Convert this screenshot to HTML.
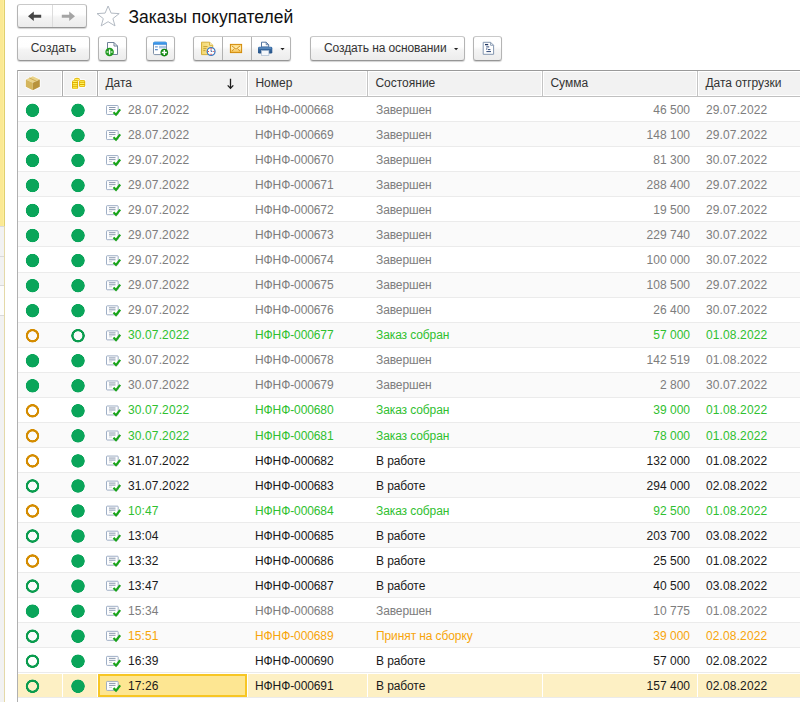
<!DOCTYPE html>
<html><head><meta charset="utf-8"><title>Заказы покупателей</title>
<style>
*{box-sizing:border-box;margin:0;padding:0}
html,body{width:800px;height:702px;overflow:hidden;background:#fff}
body{position:relative;font-family:"Liberation Sans",sans-serif;font-size:12px;color:#333}
.abs{position:absolute}
/* left strip */
#ls1{position:absolute;left:0;top:0;width:5px;height:226px;background:linear-gradient(90deg,#fbe994 0,#fbe994 3px,#fdef9f 3px,#fdef9f 4px,#e0cf6e 4px)}
#ls2{position:absolute;left:0;top:226px;width:5px;height:476px;background:#f2f2f2}
#lsl{position:absolute;left:4px;top:226px;width:1px;height:476px;background:#e4d9a8}
.lsh{position:absolute;left:0;width:4px;height:1px;background:#d9d9d9}
/* buttons */
.btn{position:absolute;height:25px;border:1px solid #b4b4b4;border-top-color:#c9c9c9;border-bottom-color:#969696;border-radius:3px;
 background:linear-gradient(#ffffff 0%,#fefefe 42%,#f4f4f4 56%,#ececec 100%);box-shadow:0 1px 1px rgba(0,0,0,.18);
 font-size:12px;color:#333;line-height:23px;white-space:nowrap}
.btn .dv{position:absolute;top:0;width:1px;height:23px;background:#cfcfcf}
.dd{position:absolute;width:0;height:0;border-left:3px solid transparent;border-right:3px solid transparent;border-top:3px solid #333}
#title{position:absolute;left:128.5px;top:7px;font-size:17.5px;line-height:20px;color:#111;white-space:nowrap}
/* table header */
#tb{position:absolute;left:17px;top:70px;width:783px;height:1px;background:#9a9a9a}
#tl{position:absolute;left:17px;top:70px;width:1px;height:632px;background:#b0b0b0}
#hb{position:absolute;left:18px;top:96px;width:782px;height:1px;background:#c0c0c0}
.hc{position:absolute;top:72px;height:23px;background:#f2f2f2;font-size:12px;line-height:23px;color:#333;white-space:nowrap}
.hs{position:absolute;top:71px;width:1px;height:25px;background:#c4c4c4}
/* rows */
.r{position:absolute;left:18px;width:782px;white-space:nowrap;font-size:12px}
.r.alt{background:#fafafa}
.sep{position:absolute;left:18px;width:782px;height:1px;background:#ebebeb}
.t{position:absolute;top:1px}
.t.d{left:110px}
.t.n{left:237px}
.t.s{left:358px}
.t.m{right:110px}
.t.g{left:688px}
.gray{color:#7d7d7d}
.green{color:#2fc02f}
.black{color:#1a1a1a}
.orange{color:#f7a50a}
.c{position:absolute;top:6px;width:14px;height:14px;border-radius:50%;margin-left:-18px}
.cf{background:radial-gradient(circle at 50% 50%,#0aa55a 6.4px,rgba(10,165,90,0) 7.1px)}
.cr{background:radial-gradient(circle at 50% 50%,rgba(10,156,78,0) 4.1px,#0a9c4e 4.7px,#0a9c4e 6.5px,rgba(10,156,78,0) 7.1px)}
.co{background:radial-gradient(circle at 50% 50%,rgba(212,140,0,0) 4.1px,#d48c00 4.7px,#d48c00 6.5px,rgba(212,140,0,0) 7.1px)}
.doc{position:absolute;left:88px;top:6.6px}
.r.sel{background:#fff}
.sb{position:absolute;top:1px;bottom:0;background:#fdf0c4}
.sf{position:absolute;left:80px;width:149px;top:1px;bottom:0;background:#fde692;border:2px solid #f7c624}
.in{position:absolute;left:0;width:782px;height:25px;line-height:25px}
#bigbtn{letter-spacing:-0.1px}
.c{transform:translateY(.35px)}
.c1{transform:translate(.5px,.35px)}
.t.n,.t.s{letter-spacing:-0.1px}
.t.d,.t.g{letter-spacing:.12px}

</style></head><body>
<svg width="0" height="0" style="position:absolute">
 <defs>
  <g id="docico">
   <rect x="0.5" y="1.5" width="11.7" height="9" rx="0.8" fill="#fdfdfe" stroke="#94a6c0" stroke-width=".9"/>
   <path d="M3 3.5H9.5 M3 5.5H9.5" stroke="#76879f" stroke-width=".85" fill="none"/>
   <path d="M3 7.5H6" stroke="#c9cfd8" stroke-width="1" fill="none"/>
   <path d="M7.5 8.2 L10 10.7 L14.2 5.4" stroke="#18a418" stroke-width="2.15" fill="none" stroke-linejoin="miter"/>
  </g>
 </defs>
</svg>
<div id="ls1"></div><div id="ls2"></div><div id="lsl"></div>
<div class="abs" style="left:0;top:286px;width:4px;height:29px;background:#fcfcfc"></div><div class="lsh" style="top:226px"></div><div class="lsh" style="top:256px"></div><div class="lsh" style="top:285px"></div><div class="lsh" style="top:315px"></div>

<!-- nav -->
<div class="btn" style="left:17px;top:4px;width:70px;height:24px">
 <div class="dv" style="left:34px;height:22px;background:#dcdcdc"></div>
</div>
<svg class="abs" style="left:0;top:0;z-index:4" width="130" height="32" viewBox="0 0 130 32">
 <path d="M28 16.2L33.8 11.4V14.8H41.2V17.7H33.8V21Z" fill="#454545"/>
 <path d="M75 16.2L69.2 11.4V14.8H61.8V17.7H69.2V21Z" fill="#a4a4a4"/>
 <path d="M108.1 6 L111.1 13.1 L119.2 13.6 L112.9 18.6 L115 25.9 L108.1 21.7 L101.2 25.9 L103.3 18.6 L97 13.6 L105.1 13.1 Z" fill="#fff" stroke="#b3bac3" stroke-width="1"/>
</svg>
<div id="title">Заказы покупателей</div>

<!-- toolbar -->
<div class="btn" style="left:17px;top:36px;width:73px;text-align:center">Создать</div>
<div class="btn" style="left:98px;top:36px;width:29px"></div>
<div class="btn" style="left:146px;top:36px;width:29px"></div>
<div class="btn" style="left:193px;top:36px;width:98px">
 <div class="dv" style="left:28px;background:#b2b2b2"></div><div class="dv" style="left:57px;background:#b2b2b2"></div>
 
</div>
<div class="btn" id="bigbtn" style="left:310px;top:36px;width:155px;padding-left:13px">Создать на основании</div>
<div class="btn" style="left:473px;top:36px;width:29px"></div>

<!-- table header -->
<div id="tb"></div><div id="tl"></div><div id="hb"></div>
<div class="hc" style="left:19px;width:42px"></div>
<div class="hc" style="left:64px;width:32px"></div>
<div class="hc" style="left:99px;width:147px;padding-left:6.4px">Дата</div>
<div class="hc" style="left:249px;width:117px;padding-left:6.4px">Номер</div>
<div class="hc" style="left:369px;width:172px;padding-left:6.4px">Состояние</div>
<div class="hc" style="left:544px;width:152px;padding-left:6.4px">Сумма</div>
<div class="hc" style="left:699px;width:101px;padding-left:6.4px">Дата отгрузки</div>
<div class="hs" style="left:62px;background:#adadad"></div><div class="hs" style="left:97px;background:#adadad"></div><div class="hs" style="left:247px"></div><div class="hs" style="left:367px"></div><div class="hs" style="left:542px"></div><div class="hs" style="left:697px"></div>

<svg class="abs" style="left:0;top:0;z-index:5" width="800" height="97" viewBox="0 0 800 97">
 <defs>
  <linearGradient id="gEnv" x1="0" y1="0" x2="0" y2="1"><stop offset="0" stop-color="#fbd676"/><stop offset=".45" stop-color="#ffeeb4"/><stop offset="1" stop-color="#f3b73c"/></linearGradient>
  <linearGradient id="gBlue" x1="0" y1="0" x2="0" y2="1"><stop offset="0" stop-color="#4ea6f2"/><stop offset="1" stop-color="#2f86db"/></linearGradient>
  <linearGradient id="gPr" x1="0" y1="0" x2="0" y2="1"><stop offset="0" stop-color="#3f74ad"/><stop offset="1" stop-color="#234f84"/></linearGradient>
  <linearGradient id="gDocY" x1="0" y1="0" x2="1" y2="0"><stop offset="0" stop-color="#f3d76e"/><stop offset="1" stop-color="#fae9a0"/></linearGradient>
 </defs>
 <!-- new doc (copy) icon -->
 <path d="M107.5 42.5H114L117.5 46V54.5H107.5Z" fill="#fff" stroke="#6f8198" stroke-width="1"/>
 <path d="M114 42.5V46H117.5" fill="none" stroke="#6f8198" stroke-width="1"/>
 <circle cx="109.6" cy="52" r="4.3" fill="#1f9a1f"/>
 <path d="M109.6 49.5V54.5" stroke="#fff" stroke-width="1.4"/>
 <path d="M106.6 52H108.4M110.8 52H112.6" stroke="#bfe8bf" stroke-width="1.6"/>
 <!-- window plus icon -->
 <rect x="153.5" y="42.2" width="13" height="12.4" rx="1.2" fill="#fff" stroke="#7d90a8" stroke-width="1"/>
 <path d="M153 44.8V43.4Q153 41.7 154.7 41.7H165.3Q167 41.7 167 43.4V44.8Z" fill="url(#gBlue)"/>
 <rect x="155" y="46.2" width="2.8" height="1.3" fill="#7fa6d6"/>
 <rect x="159" y="45.8" width="7" height="2.6" fill="#a9c4e4"/>
 <rect x="155" y="49" width="2.8" height="1.3" fill="#5d8fce"/>
 <circle cx="164.3" cy="52.6" r="3.8" fill="#0f860f"/>
 <path d="M164.3 50.1V55.1M161.8 52.6H166.8" stroke="#fff" stroke-width="1.5"/>
 <!-- doc with clock -->
 <path d="M201.5 42.2H209.6L212.7 45.3V54.6H201.5Z" fill="url(#gDocY)" stroke="#d6b03c" stroke-width="1"/>
 <path d="M209.6 42.2V45.3H212.7" fill="#fff6cf" stroke="#d6b03c" stroke-width="1"/>
 <path d="M203.3 46.6H207.5M203.3 48.6H206.5M203.3 50.6H205.5" stroke="#c9a233" stroke-width="1"/>
 <circle cx="211.1" cy="51.5" r="3.9" fill="#fff" stroke="#3b78bf" stroke-width="1.3"/>
 <path d="M211.1 48.3V49.3M211.1 53.7V54.7M207.9 51.5H208.9M213.3 51.5H214.3" stroke="#e33" stroke-width="1.2"/>
 <path d="M211.1 51.5V49.6M211.1 51.5H212.4" stroke="#3b5f9a" stroke-width=".9"/>
 <!-- envelope -->
 <rect x="230.4" y="44.4" width="11.2" height="8.2" fill="url(#gEnv)" stroke="#d28a08" stroke-width="1"/>
 <path d="M231.8 45.8L236 49.2L240.2 45.8M231.8 51.3L234.6 48.6M240.2 51.3L237.4 48.6" fill="none" stroke="#cf8a14" stroke-width=".9"/>
 <!-- printer -->
 <path d="M261.5 47V42.2H266.2L268.7 44.7V47Z" fill="#fff" stroke="#5676a0" stroke-width="1"/>
 <path d="M266.2 42.2V44.7H268.7" fill="none" stroke="#5676a0" stroke-width=".9"/>
 <rect x="258" y="46.8" width="14.3" height="6.8" rx="1.4" fill="url(#gPr)"/>
 <rect x="259.2" y="47.6" width="11.9" height="1" fill="#6a97c8"/>
 <rect x="261.3" y="50.5" width="7.6" height="4.8" fill="#f4f7fb" stroke="#9fb2cb" stroke-width=".6"/>
 <path d="M280.4 48H284.6L282.5 50.3Z" fill="#222"/>
 <!-- create-based-on arrow -->
 <path d="M454 48H458.2L456.1 50.3Z" fill="#222"/>
 <!-- structure doc icon -->
 <path d="M483.2 42.3H490.6L493.6 45.3V54.3H483.2Z" fill="#fff" stroke="#8497b0" stroke-width="1"/>
 <path d="M490.6 42.3V45.3H493.6" fill="none" stroke="#8497b0" stroke-width=".9"/>
 <path d="M485 44.6H488.2" stroke="#1f3560" stroke-width="1.3"/>
 <path d="M486.2 46.9H489.2M486 49H487.4M488 49.6H490.4M486.4 51.6H491" stroke="#2c4676" stroke-width="1"/>
 <!-- sort arrow -->
 <path d="M230.5 78.8V88 M227.7 85.4L230.5 88.4L233.3 85.4" fill="none" stroke="#1e1e1e" stroke-width="1.3"/>
 <!-- box icon -->
 <path d="M32.8 75.6L40.6 79.2V87.2L32.8 91L25 87.2V79.2Z" fill="#fff" opacity=".85"/>
 <path d="M32.8 76.3L39.8 79.5L32.8 82.8L25.8 79.5Z" fill="#ead38a"/>
 <path d="M25.8 79.5L32.8 82.8V90.2L25.8 86.8Z" fill="#d4b55c"/>
 <path d="M39.8 79.5L32.8 82.8V90.2L39.8 86.8Z" fill="#b8933c"/>
 <path d="M29.3 77.9L36.3 81.2" stroke="#cfae55" stroke-width="1"/>
 <!-- coins -->
 <g fill="#fff" stroke="#fff" stroke-width="1.8" opacity=".75">
  <rect x="72" y="80.3" width="6.1" height="8.7" rx="1.6"/>
  <ellipse cx="77" cy="79.3" rx="2.9" ry="1.5"/>
  <rect x="79.1" y="79.9" width="6.1" height="7.2" rx="1.6"/>
 </g>
 <rect x="72" y="80.3" width="6.1" height="8.7" rx="1.6" fill="#dfae00"/>
 <rect x="79.1" y="79.9" width="6.1" height="7.2" rx="1.6" fill="#dfae00"/>
 <ellipse cx="77" cy="79.3" rx="2.9" ry="1.5" fill="#dfae00"/>
 <g stroke="#fff25e" stroke-width="1.15" stroke-linecap="round">
  <path d="M73.3 81.5H76.8M73.3 83.6H76.8M73.3 85.7H76.8M73.3 87.8H76.8"/>
  <path d="M75.4 79.3H78.6"/>
  <path d="M80.4 81.2H83.9M80.4 83.4H83.9M80.4 85.6H83.9"/>
 </g>
</svg>


<div id="rows">
<div class="r gray" style="top:97px;height:24px"><div class="in" style="transform:translateY(0.0px)"><i class="c c1 cf" style="left:25px"></i><i class="c cf" style="left:71px"></i><svg class="doc" viewBox="0 0 16 13" width="16" height="13"><use href="#docico"/></svg><span class="t d">28.07.2022</span><span class="t n">НФНФ-000668</span><span class="t s">Завершен</span><span class="t m">46 500</span><span class="t g">29.07.2022</span></div></div>
<div class="sep" style="top:121px"></div>
<div class="r alt gray" style="top:122px;height:24px"><div class="in" style="transform:translateY(0.04px)"><i class="c c1 cf" style="left:25px"></i><i class="c cf" style="left:71px"></i><svg class="doc" viewBox="0 0 16 13" width="16" height="13"><use href="#docico"/></svg><span class="t d">28.07.2022</span><span class="t n">НФНФ-000669</span><span class="t s">Завершен</span><span class="t m">148 100</span><span class="t g">29.07.2022</span></div></div>
<div class="sep" style="top:146px"></div>
<div class="r gray" style="top:147px;height:24px"><div class="in" style="transform:translateY(0.08px)"><i class="c c1 cf" style="left:25px"></i><i class="c cf" style="left:71px"></i><svg class="doc" viewBox="0 0 16 13" width="16" height="13"><use href="#docico"/></svg><span class="t d">29.07.2022</span><span class="t n">НФНФ-000670</span><span class="t s">Завершен</span><span class="t m">81 300</span><span class="t g">30.07.2022</span></div></div>
<div class="sep" style="top:171px"></div>
<div class="r alt gray" style="top:172px;height:24px"><div class="in" style="transform:translateY(0.12px)"><i class="c c1 cf" style="left:25px"></i><i class="c cf" style="left:71px"></i><svg class="doc" viewBox="0 0 16 13" width="16" height="13"><use href="#docico"/></svg><span class="t d">29.07.2022</span><span class="t n">НФНФ-000671</span><span class="t s">Завершен</span><span class="t m">288 400</span><span class="t g">29.07.2022</span></div></div>
<div class="sep" style="top:196px"></div>
<div class="r gray" style="top:197px;height:24px"><div class="in" style="transform:translateY(0.16px)"><i class="c c1 cf" style="left:25px"></i><i class="c cf" style="left:71px"></i><svg class="doc" viewBox="0 0 16 13" width="16" height="13"><use href="#docico"/></svg><span class="t d">29.07.2022</span><span class="t n">НФНФ-000672</span><span class="t s">Завершен</span><span class="t m">19 500</span><span class="t g">29.07.2022</span></div></div>
<div class="sep" style="top:221px"></div>
<div class="r alt gray" style="top:222px;height:24px"><div class="in" style="transform:translateY(0.2px)"><i class="c c1 cf" style="left:25px"></i><i class="c cf" style="left:71px"></i><svg class="doc" viewBox="0 0 16 13" width="16" height="13"><use href="#docico"/></svg><span class="t d">29.07.2022</span><span class="t n">НФНФ-000673</span><span class="t s">Завершен</span><span class="t m">229 740</span><span class="t g">30.07.2022</span></div></div>
<div class="sep" style="top:246px"></div>
<div class="r gray" style="top:247px;height:25px"><div class="in" style="transform:translateY(0.24px)"><i class="c c1 cf" style="left:25px"></i><i class="c cf" style="left:71px"></i><svg class="doc" viewBox="0 0 16 13" width="16" height="13"><use href="#docico"/></svg><span class="t d">29.07.2022</span><span class="t n">НФНФ-000674</span><span class="t s">Завершен</span><span class="t m">100 000</span><span class="t g">30.07.2022</span></div></div>
<div class="sep" style="top:272px"></div>
<div class="r alt gray" style="top:273px;height:24px"><div class="in" style="transform:translateY(-0.72px)"><i class="c c1 cf" style="left:25px"></i><i class="c cf" style="left:71px"></i><svg class="doc" viewBox="0 0 16 13" width="16" height="13"><use href="#docico"/></svg><span class="t d">29.07.2022</span><span class="t n">НФНФ-000675</span><span class="t s">Завершен</span><span class="t m">108 500</span><span class="t g">29.07.2022</span></div></div>
<div class="sep" style="top:297px"></div>
<div class="r gray" style="top:298px;height:24px"><div class="in" style="transform:translateY(-0.68px)"><i class="c c1 cf" style="left:25px"></i><i class="c cf" style="left:71px"></i><svg class="doc" viewBox="0 0 16 13" width="16" height="13"><use href="#docico"/></svg><span class="t d">29.07.2022</span><span class="t n">НФНФ-000676</span><span class="t s">Завершен</span><span class="t m">26 400</span><span class="t g">30.07.2022</span></div></div>
<div class="sep" style="top:322px"></div>
<div class="r alt green" style="top:323px;height:24px"><div class="in" style="transform:translateY(-0.64px)"><i class="c c1 co" style="left:25px"></i><i class="c cr" style="left:71px"></i><svg class="doc" viewBox="0 0 16 13" width="16" height="13"><use href="#docico"/></svg><span class="t d">30.07.2022</span><span class="t n">НФНФ-000677</span><span class="t s">Заказ собран</span><span class="t m">57 000</span><span class="t g">01.08.2022</span></div></div>
<div class="sep" style="top:347px"></div>
<div class="r gray" style="top:348px;height:24px"><div class="in" style="transform:translateY(-0.6px)"><i class="c c1 cf" style="left:25px"></i><i class="c cf" style="left:71px"></i><svg class="doc" viewBox="0 0 16 13" width="16" height="13"><use href="#docico"/></svg><span class="t d">30.07.2022</span><span class="t n">НФНФ-000678</span><span class="t s">Завершен</span><span class="t m">142 519</span><span class="t g">01.08.2022</span></div></div>
<div class="sep" style="top:372px"></div>
<div class="r alt gray" style="top:373px;height:24px"><div class="in" style="transform:translateY(-0.56px)"><i class="c c1 cf" style="left:25px"></i><i class="c cf" style="left:71px"></i><svg class="doc" viewBox="0 0 16 13" width="16" height="13"><use href="#docico"/></svg><span class="t d">30.07.2022</span><span class="t n">НФНФ-000679</span><span class="t s">Завершен</span><span class="t m">2 800</span><span class="t g">30.07.2022</span></div></div>
<div class="sep" style="top:397px"></div>
<div class="r green" style="top:398px;height:24px"><div class="in" style="transform:translateY(-0.52px)"><i class="c c1 co" style="left:25px"></i><i class="c cf" style="left:71px"></i><svg class="doc" viewBox="0 0 16 13" width="16" height="13"><use href="#docico"/></svg><span class="t d">30.07.2022</span><span class="t n">НФНФ-000680</span><span class="t s">Заказ собран</span><span class="t m">39 000</span><span class="t g">01.08.2022</span></div></div>
<div class="sep" style="top:422px"></div>
<div class="r alt green" style="top:423px;height:24px"><div class="in" style="transform:translateY(-0.48px)"><i class="c c1 co" style="left:25px"></i><i class="c cf" style="left:71px"></i><svg class="doc" viewBox="0 0 16 13" width="16" height="13"><use href="#docico"/></svg><span class="t d">30.07.2022</span><span class="t n">НФНФ-000681</span><span class="t s">Заказ собран</span><span class="t m">78 000</span><span class="t g">01.08.2022</span></div></div>
<div class="sep" style="top:447px"></div>
<div class="r black" style="top:448px;height:24px"><div class="in" style="transform:translateY(-0.44px)"><i class="c c1 co" style="left:25px"></i><i class="c cf" style="left:71px"></i><svg class="doc" viewBox="0 0 16 13" width="16" height="13"><use href="#docico"/></svg><span class="t d">31.07.2022</span><span class="t n">НФНФ-000682</span><span class="t s">В работе</span><span class="t m">132 000</span><span class="t g">01.08.2022</span></div></div>
<div class="sep" style="top:472px"></div>
<div class="r alt black" style="top:473px;height:24px"><div class="in" style="transform:translateY(-0.4px)"><i class="c c1 cr" style="left:25px"></i><i class="c cf" style="left:71px"></i><svg class="doc" viewBox="0 0 16 13" width="16" height="13"><use href="#docico"/></svg><span class="t d">31.07.2022</span><span class="t n">НФНФ-000683</span><span class="t s">В работе</span><span class="t m">294 000</span><span class="t g">02.08.2022</span></div></div>
<div class="sep" style="top:497px"></div>
<div class="r green" style="top:498px;height:24px"><div class="in" style="transform:translateY(-0.36px)"><i class="c c1 co" style="left:25px"></i><i class="c cf" style="left:71px"></i><svg class="doc" viewBox="0 0 16 13" width="16" height="13"><use href="#docico"/></svg><span class="t d">10:47</span><span class="t n">НФНФ-000684</span><span class="t s">Заказ собран</span><span class="t m">92 500</span><span class="t g">01.08.2022</span></div></div>
<div class="sep" style="top:522px"></div>
<div class="r alt black" style="top:523px;height:24px"><div class="in" style="transform:translateY(-0.32px)"><i class="c c1 cr" style="left:25px"></i><i class="c cf" style="left:71px"></i><svg class="doc" viewBox="0 0 16 13" width="16" height="13"><use href="#docico"/></svg><span class="t d">13:04</span><span class="t n">НФНФ-000685</span><span class="t s">В работе</span><span class="t m">203 700</span><span class="t g">03.08.2022</span></div></div>
<div class="sep" style="top:547px"></div>
<div class="r black" style="top:548px;height:24px"><div class="in" style="transform:translateY(-0.28px)"><i class="c c1 co" style="left:25px"></i><i class="c cf" style="left:71px"></i><svg class="doc" viewBox="0 0 16 13" width="16" height="13"><use href="#docico"/></svg><span class="t d">13:32</span><span class="t n">НФНФ-000686</span><span class="t s">В работе</span><span class="t m">25 500</span><span class="t g">01.08.2022</span></div></div>
<div class="sep" style="top:572px"></div>
<div class="r alt black" style="top:573px;height:24px"><div class="in" style="transform:translateY(-0.24px)"><i class="c c1 cr" style="left:25px"></i><i class="c cf" style="left:71px"></i><svg class="doc" viewBox="0 0 16 13" width="16" height="13"><use href="#docico"/></svg><span class="t d">13:47</span><span class="t n">НФНФ-000687</span><span class="t s">В работе</span><span class="t m">40 500</span><span class="t g">03.08.2022</span></div></div>
<div class="sep" style="top:597px"></div>
<div class="r gray" style="top:598px;height:24px"><div class="in" style="transform:translateY(-0.2px)"><i class="c c1 cf" style="left:25px"></i><i class="c cf" style="left:71px"></i><svg class="doc" viewBox="0 0 16 13" width="16" height="13"><use href="#docico"/></svg><span class="t d">15:34</span><span class="t n">НФНФ-000688</span><span class="t s">Завершен</span><span class="t m">10 775</span><span class="t g">01.08.2022</span></div></div>
<div class="sep" style="top:622px"></div>
<div class="r alt orange" style="top:623px;height:24px"><div class="in" style="transform:translateY(-0.16px)"><i class="c c1 cr" style="left:25px"></i><i class="c cf" style="left:71px"></i><svg class="doc" viewBox="0 0 16 13" width="16" height="13"><use href="#docico"/></svg><span class="t d">15:51</span><span class="t n">НФНФ-000689</span><span class="t s">Принят на сборку</span><span class="t m">39 000</span><span class="t g">02.08.2022</span></div></div>
<div class="sep" style="top:647px"></div>
<div class="r black" style="top:648px;height:24px"><div class="in" style="transform:translateY(-0.12px)"><i class="c c1 cr" style="left:25px"></i><i class="c cf" style="left:71px"></i><svg class="doc" viewBox="0 0 16 13" width="16" height="13"><use href="#docico"/></svg><span class="t d">16:39</span><span class="t n">НФНФ-000690</span><span class="t s">В работе</span><span class="t m">57 000</span><span class="t g">02.08.2022</span></div></div>
<div class="sep" style="top:672px"></div>
<div class="r alt sel black" style="top:673px;height:24px"><b class="sb" style="left:0px;width:44px"></b><b class="sb" style="left:45px;width:34px"></b><b class="sb" style="left:230px;width:119px"></b><b class="sb" style="left:350px;width:174px"></b><b class="sb" style="left:525px;width:154px"></b><b class="sb" style="left:680px;width:102px"></b><b class="sf"></b><div class="in" style="transform:translateY(-0.08px)"><i class="c c1 cr" style="left:25px"></i><i class="c cf" style="left:71px"></i><svg class="doc" viewBox="0 0 16 13" width="16" height="13"><use href="#docico"/></svg><span class="t d">17:26</span><span class="t n">НФНФ-000691</span><span class="t s">В работе</span><span class="t m">157 400</span><span class="t g">02.08.2022</span></div></div>
<div class="sep" style="top:697px"></div>
</div>
</body></html>
